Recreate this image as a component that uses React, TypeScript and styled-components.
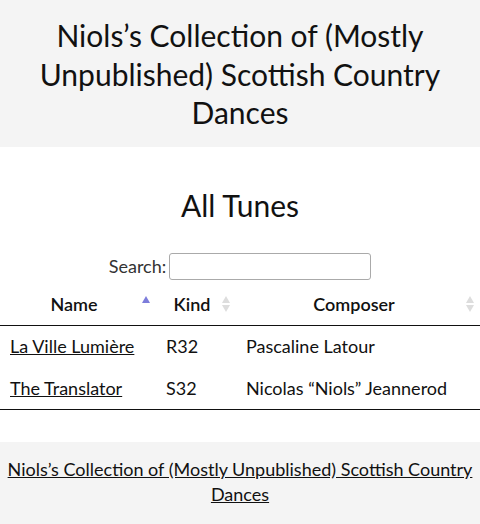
import React from "react";
import styled, { createGlobalStyle } from "styled-components";

const GlobalStyle = createGlobalStyle`
  body {
    margin: 0;
    font-family: "Lato", "Noto Sans", sans-serif;
    font-size: 18px;
    color: #111;
    background: #fff;
  }
`;

const Header = styled.header`
  background: #f4f4f4;
  padding: 16px 10px 15px;
  text-align: center;
`;

const Title = styled.h1`
  margin: 0;
  font-size: 30px;
  font-weight: 400;
  line-height: 38.5px;
`;

const Main = styled.main`
  padding: 40px 0 32px;
`;

const SectionTitle = styled.h2`
  margin: 0 0 30px;
  font-size: 30px;
  font-weight: 400;
  text-align: center;
`;

const SearchRow = styled.label`
  display: flex;
  justify-content: center;
  align-items: center;
  gap: 3px;
  color: #333;
  margin-bottom: 8px;
`;

const SearchInput = styled.input`
  width: 202px;
  height: 27px;
  box-sizing: border-box;
  border: 1px solid #aaa;
  border-radius: 3px;
  background: #fff;
`;

const Table = styled.table`
  width: 100%;
  table-layout: fixed;
  border-collapse: collapse;
`;

const HeadCell = styled.th<{ $width: number }>`
  position: relative;
  width: ${(p) => p.$width}px;
  box-sizing: border-box;
  padding: 5px 18px 10px 10px;
  font-weight: 600;
  text-align: center;
  border-bottom: 1px solid #111;
`;

const SortIcon = styled.span`
  position: absolute;
  right: 6px;
  top: 8px;
  display: flex;
  flex-direction: column;
  gap: 2px;
`;

const Arrow = styled.span<{ $dir: "up" | "down"; $active?: boolean; $hidden?: boolean }>`
  width: 0;
  height: 0;
  border-left: 4px solid transparent;
  border-right: 4px solid transparent;
  ${(p) =>
    p.$dir === "up"
      ? `border-bottom: 7px solid ${p.$active ? "#7d7ddb" : "#ddd"};`
      : `border-top: 7px solid #ddd;`}
  visibility: ${(p) => (p.$hidden ? "hidden" : "visible")};
`;

const Cell = styled.td`
  padding: 9px 10px;
  line-height: 23px;
  white-space: nowrap;
`;

const Row = styled.tr<{ $last?: boolean }>`
  border-bottom: 1px solid ${(p) => (p.$last ? "#111" : "transparent")};
`;

const Link = styled.a`
  color: #111;
  text-decoration: underline;
`;

const Footer = styled.footer`
  background: #f4f4f4;
  padding: 15px 4px 28px;
  text-align: center;
  line-height: 25px;
`;

const tunes = [
  { name: "La Ville Lumière", kind: "R32", composer: "Pascaline Latour" },
  { name: "The Translator", kind: "S32", composer: "Nicolas “Niols” Jeannerod" },
];

const SortMark: React.FC<{ active?: boolean }> = ({ active }) => (
  <SortIcon>
    <Arrow $dir="up" $active={active} />
    <Arrow $dir="down" $hidden={active} />
  </SortIcon>
);

const App: React.FC = () => {
  return (
    <>
      <GlobalStyle />
      <Header>
        <Title>Niols’s Collection of (Mostly Unpublished) Scottish Country Dances</Title>
      </Header>
      <Main>
        <SectionTitle>All Tunes</SectionTitle>
        <SearchRow>
          Search:
          <SearchInput type="search" />
        </SearchRow>
        <Table>
          <thead>
            <tr>
              <HeadCell $width={156}>
                Name
                <SortMark active />
              </HeadCell>
              <HeadCell $width={80}>
                Kind
                <SortMark />
              </HeadCell>
              <HeadCell $width={244}>
                Composer
                <SortMark />
              </HeadCell>
            </tr>
          </thead>
          <tbody>
            {tunes.map((t, i) => (
              <Row key={t.name} $last={i === tunes.length - 1}>
                <Cell>
                  <Link href="#">{t.name}</Link>
                </Cell>
                <Cell>{t.kind}</Cell>
                <Cell>{t.composer}</Cell>
              </Row>
            ))}
          </tbody>
        </Table>
      </Main>
      <Footer>
        <Link href="#">Niols’s Collection of (Mostly Unpublished) Scottish Country Dances</Link>
      </Footer>
    </>
  );
};

export default App;
